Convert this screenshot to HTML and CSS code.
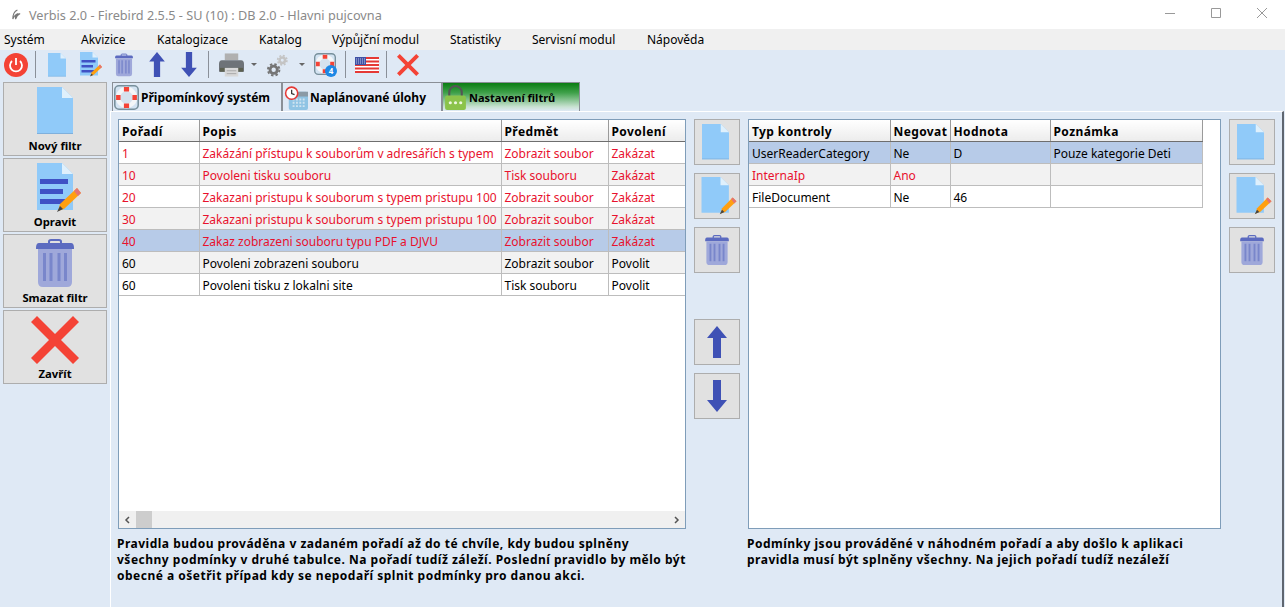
FILE: index.html
```html
<!DOCTYPE html>
<html lang="cs">
<head>
<meta charset="utf-8">
<title>Verbis 2.0</title>
<link rel="stylesheet" href="styles.css">
</head>
<body>
<svg class="defs" width="0" height="0" aria-hidden="true">
  <symbol id="doc" viewBox="0 0 36 48">
    <path d="M0 0H25L36 11V47H0Z" fill="#90caf9"/>
    <path d="M25 0L36 11H25Z" fill="#dff0fc"/>
    <path d="M0 46.500H36" stroke="#7fb0dc" stroke-width="1"/>
  </symbol>
  <symbol id="docedit" viewBox="0 0 46 50">
    <path d="M0 0H25L36 11V47H0Z" fill="#90caf9"/>
    <path d="M25 0L36 11H25Z" fill="#dff0fc"/>
    <path d="M3 16H31V21H3ZM3 26H26V31H3ZM3 36H28V41H3Z" fill="#3f51c5"/>
    <path d="M21 48L23 41L40 25L44 30L27 46Z" fill="#ff9f10"/>
    <path d="M37 28L40 25L44 30L41 33Z" fill="#e57373"/>
    <path d="M20 49L23 43L26 46Z" fill="#444"/>
  </symbol>
  <symbol id="docpen" viewBox="0 0 46 50">
    <path d="M0 0H25L36 11V47H0Z" fill="#90caf9"/>
    <path d="M25 0L36 11H25Z" fill="#dff0fc"/>
    <path d="M25 48L27 41L41 27L46 32L31 46Z" fill="#ff9f10"/>
    <path d="M39 29L41 27L46 32L43 35Z" fill="#e57373"/>
    <path d="M24 49L27 43L30 46Z" fill="#444"/>
  </symbol>
  <symbol id="trash" viewBox="0 0 38 48">
    <path d="M13 5V2.500Q13 1 15 1H23Q25 1 25 2.500V5" fill="none" stroke="#5c6bc0" stroke-width="2"/>
    <path d="M3 4H35Q38 4 38 9V10H0V9Q0 4 3 4Z" fill="#5c6bc0"/>
    <path d="M2 10H36V43Q36 48 31 48H7Q2 48 2 43Z" fill="#9fa8da"/>
    <path d="M8.500 14V42M15 14V42M23 14V42M29.500 14V42" stroke="#7986cb" stroke-width="3"/>
  </symbol>
  <symbol id="up" viewBox="0 0 20 32">
    <path d="M10 0L20 12H14V32H6V12H0Z" fill="#3f51b5"/>
  </symbol>
  <symbol id="down" viewBox="0 0 20 32">
    <path d="M10 32L20 20H14V0H6V20H0Z" fill="#3f51b5"/>
  </symbol>
  <symbol id="cross" viewBox="0 0 48 48">
    <path d="M6 0L24 18L42 0L48 6L30 24L48 42L42 48L24 30L6 48L0 42L18 24L0 6Z" fill="#f44336"/>
  </symbol>
  <symbol id="power" viewBox="0 0 24 24">
    <circle cx="12" cy="12" r="12" fill="#f44336"/>
    <path d="M8 8A6 6 0 1 0 16 8" fill="none" stroke="#fff" stroke-width="1.800"/>
    <path d="M12 5V12" stroke="#fff" stroke-width="1.800"/>
  </symbol>
  <symbol id="printer" viewBox="0 0 26 24">
    <path d="M6 0H20V7H6Z" fill="#b0b0b0"/>
    <path d="M3 7H23Q26 7 26 11V19H0V11Q0 7 3 7Z" fill="#6e7378"/>
    <path d="M1 15H25V19H1Z" fill="#5c6050"/>
    <path d="M6 15H20V24H6Z" fill="#d8d8d8"/>
    <path d="M8 18H18M8 21H18" stroke="#a8a8a8" stroke-width="1"/>
  </symbol>
  <symbol id="gears" viewBox="0 0 24 24">
    <circle cx="8" cy="17" r="3.800" fill="none" stroke="#757575" stroke-width="3"/>
    <circle cx="8" cy="17" r="6" fill="none" stroke="#757575" stroke-width="2" stroke-dasharray="2.500 2.212"/>
    <circle cx="17" cy="7" r="2.800" fill="none" stroke="#c4c4c4" stroke-width="2.600"/>
    <circle cx="17" cy="7" r="4.800" fill="none" stroke="#c4c4c4" stroke-width="1.800" stroke-dasharray="2 1.770"/>
  </symbol>
  <symbol id="buoy" viewBox="0 0 24 24">
    <rect x=".75" y=".75" width="22.500" height="22.500" rx="4" fill="#d3e3f2" stroke="#78909c" stroke-width="1.500"/>
    <circle cx="12" cy="12" r="6" fill="#d5e2ee"/>
    <circle cx="12" cy="12" r="8.200" fill="none" stroke="#f4f6f8" stroke-width="4.200"/>
    <path d="M9.500 2H14.500V6.300H9.500ZM9.500 17.700H14.500V22H9.500ZM2 9.500H6.300V14.500H2ZM17.700 9.500H22V14.500H17.700Z" fill="#f44336"/>
  </symbol>
  <symbol id="flag" viewBox="0 0 24 16">
    <rect width="24" height="16" fill="#fff"/>
    <path d="M0 1H24M0 4.500H24M0 8H24M0 11.500H24M0 15H24" stroke="#e53935" stroke-width="2"/>
    <rect width="11" height="8" fill="#3f51a5"/>
    <path d="M1 2H10M1 4H10M1 6H10" stroke="#dfe3f5" stroke-width=".8" stroke-dasharray="1 1"/>
  </symbol>
  <symbol id="clock" viewBox="0 0 26 26">
    <rect x="6" y="7" width="20" height="19" rx="2" fill="#90c4e4"/>
    <rect x="6" y="7" width="20" height="5" fill="#8a9aa6"/>
    <path d="M10 15H23M10 18.500H23M10 22H23" stroke="#cfe3f0" stroke-width="2" stroke-dasharray="2 1.500"/>
    <circle cx="9" cy="8.500" r="6.300" fill="#fff" stroke="#e53935" stroke-width="1.600"/>
    <path d="M9 5V9L12 10" fill="none" stroke="#333" stroke-width="1.300"/>
  </symbol>
  <symbol id="lock" viewBox="0 0 22 24">
    <path d="M5 12V7A6 6 0 0 1 17 7V12" fill="none" stroke="#555" stroke-width="2"/>
    <rect x="1" y="10" width="20" height="14" rx="2" fill="#8bc34a"/>
    <circle cx="6" cy="17" r="1.500" fill="#eef7e0"/><circle cx="11" cy="17" r="1.500" fill="#eef7e0"/><circle cx="16" cy="17" r="1.500" fill="#eef7e0"/>
  </symbol>
</svg>
<div class="app">
  <header class="titlebar">
    <div class="title">
      <svg class="logo" viewBox="0 0 12 12"><path d="M7 1Q2 3 2 11Q4 6 8 5Q4 7 5 11Q6 7 10 5" fill="none" stroke="#777" stroke-width="1.200"/></svg>
      <span>Verbis 2.0 - Firebird 2.5.5 - SU (10) : DB 2.0 - Hlavni pujcovna</span>
    </div>
    <div class="winbtns">
      <svg width="10" height="10" viewBox="0 0 10 10"><path d="M0 5.500H10" stroke="#999"/></svg>
      <svg width="10" height="10" viewBox="0 0 10 10"><path d="M.5 .5H9.500V9.500H.5Z" fill="none" stroke="#999"/></svg>
      <svg width="10" height="10" viewBox="0 0 10 10"><path d="M0 0L10 10M10 0L0 10" stroke="#999"/></svg>
    </div>
  </header>
  <nav class="menubar">
    <span class="m1">Systém</span><span class="m2">Akvizice</span><span class="m3">Katalogizace</span><span class="m4">Katalog</span><span class="m5">Výpůjční modul</span><span class="m6">Statistiky</span><span class="m7">Servisní modul</span><span>Nápověda</span>
  </nav>
  <div class="toolbar">
    <svg class="ti power"><use href="#power"/></svg>
    <i class="sep"></i>
    <svg class="ti tdoc"><use href="#doc"/></svg>
    <svg class="ti tedit"><use href="#docedit"/></svg>
    <svg class="ti ttrash"><use href="#trash"/></svg>
    <svg class="ti tup"><use href="#up"/></svg>
    <svg class="ti tdown"><use href="#down"/></svg>
    <i class="sep s2"></i>
    <svg class="ti tprint"><use href="#printer"/></svg>
    <i class="caret"></i>
    <svg class="ti tgears"><use href="#gears"/></svg>
    <i class="caret c2"></i>
    <span class="buoywrap"><svg class="ti tbuoy"><use href="#buoy"/></svg><b class="badge">4</b></span>
    <i class="sep s3"></i>
    <svg class="ti tflag"><use href="#flag"/></svg>
    <i class="sep s4"></i>
    <svg class="ti tcross"><use href="#cross"/></svg>
  </div>
  <div class="body">
    <aside class="sidebar">
      <button class="bigbtn"><svg class="big-doc"><use href="#doc"/></svg><span>Nový filtr</span></button>
      <button class="bigbtn"><svg class="big-edit"><use href="#docedit"/></svg><span>Opravit</span></button>
      <button class="bigbtn"><svg class="big-trash"><use href="#trash"/></svg><span>Smazat filtr</span></button>
      <button class="bigbtn"><svg class="big-cross"><use href="#cross"/></svg><span>Zavřít</span></button>
    </aside>
    <main class="main">
      <div class="tabs">
        <div class="tab t1"><svg class="tabicon"><use href="#buoy"/></svg>Připomínkový systém</div>
        <div class="tab t2"><svg class="tabicon"><use href="#clock"/></svg>Naplánované úlohy</div>
        <div class="tab t3 active"><svg class="tabicon"><use href="#lock"/></svg>Nastavení filtrů</div>
      </div>
      <div class="panel">
        <section class="col-left">
          <div class="gridbox left">
            <table class="grid">
              <colgroup><col class="c80"><col class="c300"><col class="c106"><col class="c79"></colgroup>
              <thead><tr><th>Pořadí</th><th>Popis</th><th>Předmět</th><th>Povolení</th></tr></thead>
              <tbody>
                <tr class="red"><td>1</td><td>Zakázání přístupu k souborům v adresářích s typem</td><td>Zobrazit soubor</td><td>Zakázat</td></tr>
                <tr class="red"><td>10</td><td>Povoleni tisku souboru</td><td>Tisk souboru</td><td>Zakázat</td></tr>
                <tr class="red"><td>20</td><td>Zakazani pristupu k souborum s typem pristupu 100</td><td>Zobrazit soubor</td><td>Zakázat</td></tr>
                <tr class="red"><td>30</td><td>Zakazani pristupu k souborum s typem pristupu 100</td><td>Zobrazit soubor</td><td>Zakázat</td></tr>
                <tr class="red sel"><td>40</td><td>Zakaz zobrazeni souboru typu PDF a DJVU</td><td>Zobrazit soubor</td><td>Zakázat</td></tr>
                <tr><td>60</td><td>Povoleni zobrazeni souboru</td><td>Zobrazit soubor</td><td>Povolit</td></tr>
                <tr><td>60</td><td>Povoleni tisku z lokalni site</td><td>Tisk souboru</td><td>Povolit</td></tr>
              </tbody>
            </table>
            <div class="hscroll">
              <svg class="arr" viewBox="0 0 8 8"><path d="M5.500 1L2.500 4L5.500 7" fill="none" stroke="#555" stroke-width="1.500"/></svg>
              <i class="thumb"></i>
              <svg class="arr" viewBox="0 0 8 8"><path d="M2.500 1L5.500 4L2.500 7" fill="none" stroke="#555" stroke-width="1.500"/></svg>
            </div>
          </div>
          <p class="note">Pravidla budou prováděna v zadaném pořadí až do té chvíle, kdy budou splněny<br>všechny podmínky v druhé tabulce. Na pořadí tudíž záleží. Poslední pravidlo by mělo být<br>obecné a ošetřit případ kdy se nepodaří splnit podmínky pro danou akci.</p>
        </section>
        <div class="btncol">
          <button class="sq"><svg class="sq-doc"><use href="#doc"/></svg></button>
          <button class="sq"><svg class="sq-pen"><use href="#docpen"/></svg></button>
          <button class="sq"><svg class="sq-trash"><use href="#trash"/></svg></button>
          <button class="sq gap-arrows"><svg class="sq-arrow"><use href="#up"/></svg></button>
          <button class="sq"><svg class="sq-arrow"><use href="#down"/></svg></button>
        </div>
        <section class="col-right">
          <div class="gridbox right">
            <table class="grid">
              <colgroup><col class="c141"><col class="c61"><col class="c100"><col class="c152"></colgroup>
              <thead><tr><th>Typ kontroly</th><th>Negovat</th><th>Hodnota</th><th>Poznámka</th></tr></thead>
              <tbody>
                <tr class="sel"><td>UserReaderCategory</td><td>Ne</td><td>D</td><td>Pouze kategorie Deti</td></tr>
                <tr class="red"><td>InternaIp</td><td>Ano</td><td></td><td></td></tr>
                <tr><td>FileDocument</td><td>Ne</td><td>46</td><td></td></tr>
              </tbody>
            </table>
          </div>
          <p class="note">Podmínky jsou prováděné v náhodném pořadí a aby došlo k aplikaci<br>pravidla musí být splněny všechny. Na jejich pořadí tudíž nezáleží</p>
        </section>
        <div class="btncol">
          <button class="sq"><svg class="sq-doc"><use href="#doc"/></svg></button>
          <button class="sq"><svg class="sq-pen"><use href="#docpen"/></svg></button>
          <button class="sq"><svg class="sq-trash"><use href="#trash"/></svg></button>
        </div>
      </div>
    </main>
  </div>
</div>
</body>
</html>
```
FILE: styles.css
```css
* { box-sizing: border-box; }
html, body { margin: 0; padding: 0; }
body { width: 1285px; height: 607px; overflow: hidden; font-family: "Noto Sans", "DejaVu Sans", sans-serif; font-size: 12px; color: #000; background: #dfe9f5; }
.defs { position: absolute; }
.app { display: flex; flex-direction: column; height: 607px; }

.titlebar { height: 29px; background: #fff; display: flex; align-items: center; justify-content: space-between; padding: 0 18px 0 11px; }
.title { display: flex; align-items: center; gap: 7px; color: #8a8a8a; font-size: 12.700px; }
.logo { width: 11px; height: 11px; }
.winbtns { display: flex; gap: 36px; margin-bottom: 3px; }

.menubar { height: 21px; background: #f0f0f0; display: flex; align-items: center; padding-left: 4px; }
.m1 { width: 77px; } .m2 { width: 76px; } .m3 { width: 102px; } .m4 { width: 73px; } .m5 { width: 118px; } .m6 { width: 82px; } .m7 { width: 115px; }

.toolbar { height: 32px; display: flex; align-items: center; padding: 0 0 3px 4px; }
.ti { display: block; flex: none; }
.sep { width: 1px; height: 27px; background: #8a9099; flex: none; }
.caret { width: 0; height: 0; border: 3px solid transparent; border-top: 3px solid #666; border-bottom: 0; flex: none; margin-left: 7px; }
.power { width: 24px; height: 24px; margin-right: 7px; }
.tdoc { width: 18px; height: 24px; margin-left: 12px; }
.tedit { width: 23px; height: 25px; margin-left: 14px; }
.ttrash { width: 18px; height: 24px; margin-left: 12px; }
.tup { width: 16px; height: 25px; margin-left: 16px; }
.tdown { width: 16px; height: 25px; margin-left: 16px; }
.s2 { margin-left: 11px; }
.tprint { width: 25px; height: 24px; margin-left: 10px; }
.tgears { width: 23px; height: 24px; margin-left: 9px; }
.c2 { margin-left: 10px; }
.buoywrap { position: relative; width: 22px; height: 24px; margin-left: 9px; flex: none; }
.tbuoy { width: 22px; height: 22px; }
.badge { position: absolute; right: -1px; bottom: 0; width: 12px; height: 12px; border-radius: 50%; background: #1e88e5; color: #fff; font-size: 8px; line-height: 12px; text-align: center; }
.s3 { margin-left: 9px; }
.tflag { width: 24px; height: 16px; margin-left: 9px; }
.s4 { margin-left: 7px; }
.tcross { width: 22px; height: 22px; margin-left: 10px; }

.body { flex: 1; display: flex; min-height: 0; }
.sidebar { width: 110px; padding: 0 3px; display: flex; flex-direction: column; gap: 2px; }
button { font: inherit; padding: 0; margin: 0; color: inherit; }
.bigbtn { width: 104px; height: 74px; background: #e1e1e1; border: 1px solid #adadad; display: flex; flex-direction: column; align-items: center; font-weight: 700; font-size: 11.300px; line-height: 14px; flex: none; }
.big-doc { width: 36px; height: 48px; margin: 4px 0 4px; }
.big-edit { width: 46px; height: 50px; margin: 4px 0 2px 10px; }
.big-trash { width: 38px; height: 48px; margin: 4px 0 4px; }
.big-cross { width: 48px; height: 48px; margin: 5px 0 3px; }

.main { flex: 1; display: flex; flex-direction: column; min-width: 0; }
.tabs { height: 29px; display: flex; padding-left: 2px; }
.tab { height: 29px; display: flex; align-items: center; gap: 2px; font-weight: 700; border: 1px solid #8a8f96; border-bottom: 0; padding-left: 1px; flex: none; }
.t1 { width: 170px; }
.t2 { width: 160px; padding-left: 0; }
.t3 { width: 138px; padding-left: 0; gap: 1px; background: linear-gradient(#0a7d12, #3fa14a 35%, #c9e2d2 85%, #dfe9f5); font-size: 11px; }
.tabicon { width: 25px; height: 25px; flex: none; }

.panel { flex: 1; display: flex; border-top: 1px solid #fff; border-left: 1px solid #fff; border-right: 2px solid #5f6670; padding: 7px 8px 0 7px; margin-right: 1px; min-height: 0; }
.col-left { width: 568px; flex: none; }
.col-right { width: 473px; flex: none; }
.gridbox { height: 410px; border: 1px solid #7f9db9; background: #fff; position: relative; overflow: hidden; }
.grid { border-collapse: collapse; table-layout: fixed; }
.left .grid { width: 565px; }
.right .grid { width: 453px; }
.c80 { width: 80px; } .c300 { width: 302px; } .c106 { width: 107px; } .c79 { width: 78px; }
.c141 { width: 141px; } .c61 { width: 60px; } .c100 { width: 100px; } .c152 { width: 152px; }
.grid th { height: 21px; padding: 2px 0 0 3px; text-align: left; font-weight: 700; letter-spacing: .4px; background: linear-gradient(#fff, #ececec); border-right: 1px solid #9a9a9a; border-bottom: 1px solid #6e6e6e; white-space: nowrap; overflow: hidden; }
.grid td { height: 22px; padding: 2px 0 0 3px; border-right: 1px solid #bdbdbd; border-bottom: 1px solid #bdbdbd; white-space: nowrap; overflow: hidden; }
.grid tbody tr:nth-child(even) td { background: #f2f2f2; }
.grid tbody tr.red td { color: #e8112d; }
.grid tbody tr.sel td { background: #b7cbe8; }
.left .grid th:last-child, .left .grid td:last-child { border-right: 0; }
.hscroll { position: absolute; left: 0; right: 0; bottom: 0; height: 17px; background: #f0f0f0; display: flex; align-items: center; justify-content: space-between; }
.arr { width: 17px; height: 8px; }
.thumb { position: absolute; left: 17px; top: 0; width: 16px; height: 17px; background: #cdcdcd; }
.note { margin: 7px 0 0 -1px; font-weight: 700; line-height: 16px; letter-spacing: .5px; white-space: nowrap; }
.btncol { width: 62px; flex: none; display: flex; flex-direction: column; align-items: center; gap: 8px; }
.sq { width: 46px; height: 46px; background: #e1e1e1; border: 1px solid #adadad; display: flex; align-items: center; justify-content: center; flex: none; }
.gap-arrows { margin-top: 38px; }
.sq-doc { width: 27px; height: 36px; margin-right: 3px; }
.sq-pen { width: 38px; height: 38px; margin-left: 4px; }
.sq-trash { width: 24px; height: 30px; }
.sq-arrow { width: 20px; height: 32px; }
```
